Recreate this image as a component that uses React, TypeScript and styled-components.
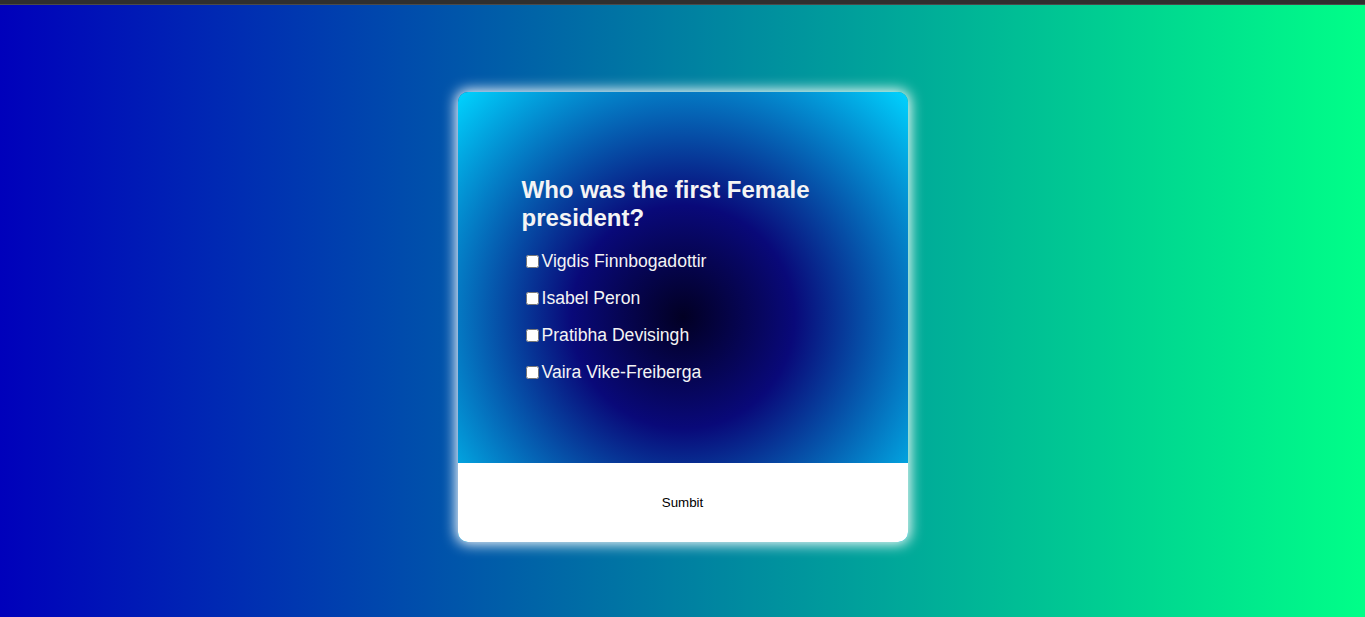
import React from "react";
import styled, { createGlobalStyle } from "styled-components";

const GlobalStyle = createGlobalStyle`
  html, body {
    margin: 0;
    padding: 0;
    height: 100%;
  }
  body {
    font-family: "Liberation Sans", Arial, sans-serif;
    background: #0000bb;
    overflow: hidden;
  }
  #root { height: 100%; }
`;

const Page = styled.div`
  height: 617px;
  display: flex;
  flex-direction: column;
  background: linear-gradient(90deg, #0000bb 0%, #00ff88 100%);
`;

const TopBar = styled.div`
  height: 4px;
  flex: none;
  background: #2f2f2f;
  border-bottom: 1px solid #4a4a4a;
`;

const Stage = styled.main`
  flex: 1;
  display: flex;
  justify-content: center;
  align-items: flex-start;
  padding-top: 87px;
`;

const Card = styled.section`
  width: 450px;
  height: 450px;
  border-radius: 10px;
  overflow: hidden;
  display: flex;
  flex-direction: column;
  background: radial-gradient(
    circle,
    rgba(2, 0, 36, 1) 0%,
    rgba(9, 9, 121, 1) 35%,
    rgba(0, 212, 255, 1) 100%
  );
  box-shadow: 0 0 14px 2px #ffffff;
`;

const QuestionArea = styled.div`
  flex: 1;
  display: flex;
  flex-direction: column;
  justify-content: center;
  padding: 3px 64px 0;
  color: #f4f4f4;
`;

const Title = styled.h2`
  margin: 0 0 19px;
  font-size: 24px;
  font-weight: 700;
  line-height: normal;
`;

const Options = styled.div`
  display: flex;
  flex-direction: column;
  gap: 17px;
`;

const Option = styled.label`
  display: flex;
  align-items: center;
  font-size: 17.6px;
  line-height: 20px;
  cursor: pointer;
`;

const Box = styled.input`
  width: 13px;
  height: 13px;
  margin: 0 3px 0 4px;
`;

const Footer = styled.div`
  height: 79px;
  flex: none;
  background: #ffffff;
  display: flex;
  align-items: center;
  justify-content: center;
`;

const SubmitButton = styled.button`
  border: none;
  background: transparent;
  font-family: "Liberation Sans", Arial, sans-serif;
  font-size: 13.33px;
  color: #000;
  padding: 4px 8px;
  cursor: pointer;
`;

const answers = [
  "Vigdis Finnbogadottir",
  "Isabel Peron",
  "Pratibha Devisingh",
  "Vaira Vike-Freiberga",
];

export default function App() {
  return (
    <>
      <GlobalStyle />
      <Page>
        <TopBar />
        <Stage>
          <Card>
            <QuestionArea>
              <Title>Who was the first Female president?</Title>
              <Options>
                {answers.map((a) => (
                  <Option key={a}>
                    <Box type="checkbox" />
                    {a}
                  </Option>
                ))}
              </Options>
            </QuestionArea>
            <Footer>
              <SubmitButton>Sumbit</SubmitButton>
            </Footer>
          </Card>
        </Stage>
      </Page>
    </>
  );
}
